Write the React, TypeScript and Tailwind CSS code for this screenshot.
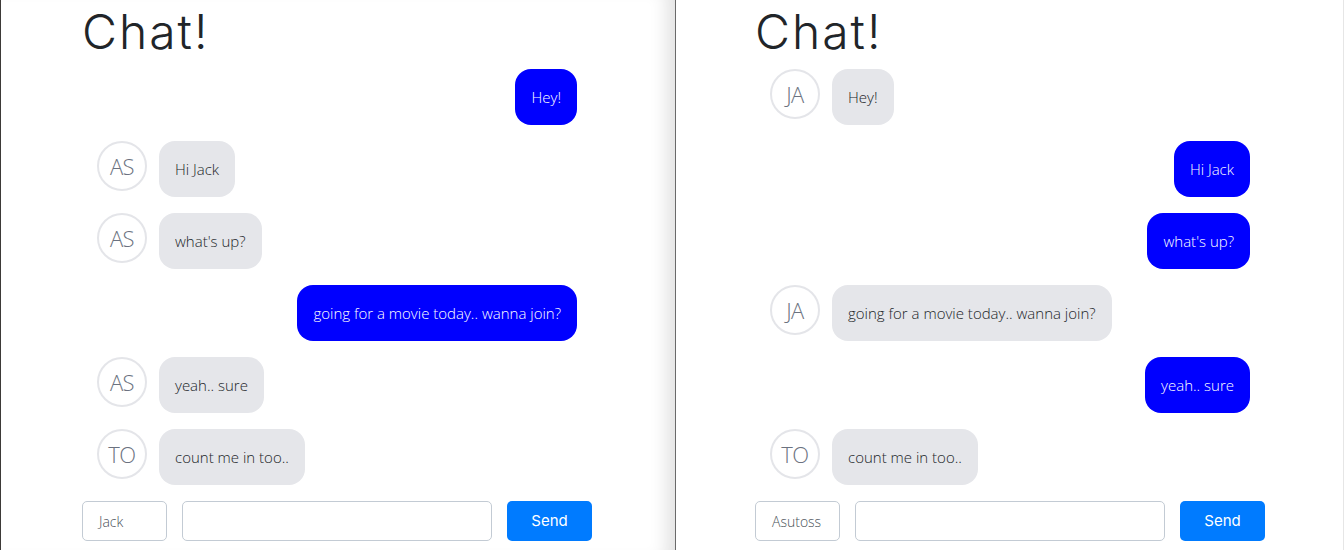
import React from "react";

type Msg = { text: string; mine: boolean; initials?: string };

const leftMsgs: Msg[] = [
  { text: "Hey!", mine: true },
  { text: "Hi Jack", mine: false, initials: "AS" },
  { text: "what's up?", mine: false, initials: "AS" },
  { text: "going for a movie today.. wanna join?", mine: true },
  { text: "yeah.. sure", mine: false, initials: "AS" },
  { text: "count me in too..", mine: false, initials: "TO" },
];

const rightMsgs: Msg[] = [
  { text: "Hey!", mine: false, initials: "JA" },
  { text: "Hi Jack", mine: true },
  { text: "what's up?", mine: true },
  { text: "going for a movie today.. wanna join?", mine: false, initials: "JA" },
  { text: "yeah.. sure", mine: true },
  { text: "count me in too..", mine: false, initials: "TO" },
];

const bodyFont = { fontFamily: '"Open Sans", "Noto Sans", sans-serif' };

function Row({ m }: { m: Msg }) {
  if (m.mine) {
    return (
      <div className="flex justify-end h-14">
        <div className="h-14 flex items-center px-4 rounded-[16px] bg-[#0000ff] text-white text-[15px] font-light">
          {m.text}
        </div>
      </div>
    );
  }
  return (
    <div className="flex items-start gap-3 h-14">
      <div className="w-[50px] h-[50px] rounded-full border-2 border-[#e4e5e9] flex items-center justify-center text-[22px] font-light text-[#6b7280] tracking-[-0.5px]">
        {m.initials}
      </div>
      <div className="h-14 flex items-center px-4 rounded-[16px] bg-[#e5e6ea] text-[#212529] text-[15px] font-light">
        {m.text}
      </div>
    </div>
  );
}

function Panel({ msgs, name, offset }: { msgs: Msg[]; name: string; offset: string }) {
  return (
    <div className={`w-[510px] ${offset} flex flex-col`} style={bodyFont}>
      <div
        className="h-[69px] pt-[3px] text-[48px] leading-[58px] text-[#212529] font-light"
        style={{ fontFamily: 'Inter, "Open Sans", sans-serif', letterSpacing: "2px" }}
      >
        Chat!
      </div>
      <div className="flex flex-col gap-4 px-[15px]">
        {msgs.map((m, i) => (
          <Row key={i} m={m} />
        ))}
      </div>
      <div className="flex gap-[15px] mt-4 h-10">
        <div className="w-[85px] h-10 border border-[#c3cbd4] rounded-[5px] flex items-center pl-4 text-[14px] font-light text-[#495057]">
          {name}
        </div>
        <div className="w-[310px] h-10 border border-[#c3cbd4] rounded-[5px]" />
        <button
          className="w-[85px] h-10 rounded-[5px] bg-[#007bff] text-white text-[15px]"
          style={{ fontFamily: 'Inter, "Open Sans", sans-serif' }}
        >
          Send
        </button>
      </div>
      <div className="mt-[6px] text-[14px] leading-[20px] text-[#5a5470] whitespace-nowrap">
        Logged in as {name}. Type a message and hit send to talk with everyone in the room.
      </div>
    </div>
  );
}

export default function App() {
  return (
    <div className="w-[1344px] h-[550px] overflow-hidden flex bg-white">
      <div className="w-[676px] h-full border-l border-l-[#3d3a38] border-r border-r-[#6a6a6a] shadow-[inset_-22px_0_18px_-14px_rgba(0,0,0,0.12)] overflow-hidden">
        <Panel msgs={leftMsgs} name="Jack" offset="ml-[81px]" />
      </div>
      <div className="w-[668px] h-full border-r border-r-[#e6e6e6] overflow-hidden">
        <Panel msgs={rightMsgs} name="Asutoss" offset="ml-[79px]" />
      </div>
    </div>
  );
}
